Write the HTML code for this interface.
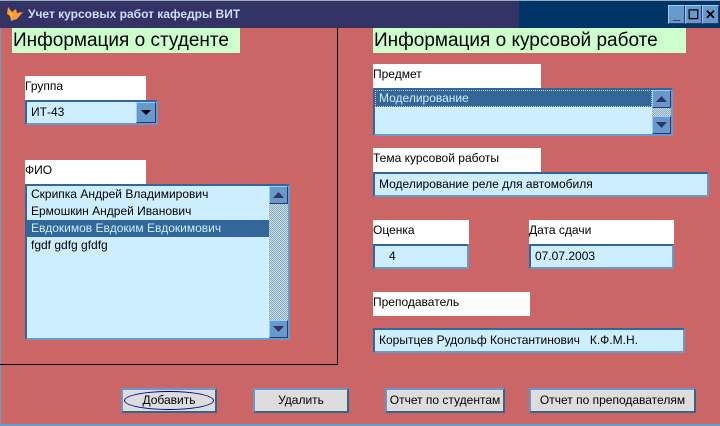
<!DOCTYPE html>
<html><head><meta charset="utf-8"><style>
*{margin:0;padding:0;box-sizing:border-box}
body{width:720px;height:426px;overflow:hidden;background:#cc6666;font-family:"Liberation Sans",sans-serif;font-size:12px;position:relative;color:#000}
.a{position:absolute}
.tb{left:0;top:0;width:720px;height:28px;background:linear-gradient(to right,#333366 0,#333366 519px,#003366 519px);border-top:1px solid #9ab}
.tt{left:28px;top:7px;color:#ccddff;font-weight:bold;font-size:12px}
.wb{top:5px;width:17px;height:19px;background:#6699cc;border:1px solid #9cf;border-right-color:#336;border-bottom-color:#336;color:#000;font-weight:bold;text-align:center;line-height:17px;font-size:13px}
.h{background:#ccffcc;height:25px;font-size:19px;line-height:26px;padding-left:1px}
.l{background:#fff;height:24px;font-size:12px;line-height:20px}
.in{background:#cceeff;border:2px solid #336699;border-right-color:#6699cc;border-bottom-color:#6699cc;line-height:20px;padding-left:4px}
.sb{background:#6699cc;border:1px solid #9cf;border-right-color:#336;border-bottom-color:#336}
.tr{background:repeating-conic-gradient(#8ab 0 25%,#cde 0 50%) 0 0/2px 2px}
.bt{top:388px;height:25px;background:#dddddd;border:2px solid #6699cc;border-right-color:#336688;border-bottom-color:#336688;text-align:center;line-height:21px;font-size:12px}
.it{height:17px;line-height:17px;padding-left:4px}
.sel{background:#336699;color:#cceeff}
</style></head><body>
<div class="a" style="left:0;top:28px;width:1px;height:398px;background:#6699cc"></div>
<div class="a" style="left:0;top:424px;width:720px;height:2px;background:#6699cc"></div>
<div class="a tb"></div>
<svg class="a" style="left:6px;top:6px" width="18" height="16" viewBox="0 0 18 16"><path d="M2 1 L6 6 L10 3 L11 7 L17 6 L11 13 L5 15 L4 10 L1 8 Z" fill="#f93"/><path d="M4 6 L7 9 L5 12Z" fill="#fc3"/></svg>
<div class="a tt">Учет курсовых работ кафедры ВИТ</div>
<div class="a wb" style="left:668px">_</div>
<div class="a wb" style="left:685px">☐</div>
<div class="a wb" style="left:702px">✕</div>

<div class="a" style="left:337px;top:28px;width:1px;height:337px;background:#000"></div>
<div class="a" style="left:0;top:364px;width:338px;height:1px;background:#000"></div>

<div class="a h" style="left:12px;top:28px;width:228px">Информация о студенте</div>
<div class="a h" style="left:373px;top:28px;width:313px">Информация о курсовой работе</div>

<div class="a l" style="left:25px;top:76px;width:121px">Группа</div>
<div class="a in" style="left:25px;top:100px;width:133px;height:25px">ИТ-43</div>
<div class="a sb" style="left:136px;top:102px;width:20px;height:21px"><svg width="18" height="19"><path d="M4 7 L14 7 L9 12Z" fill="#000"/></svg></div>

<div class="a l" style="left:25px;top:160px;width:121px">ФИО</div>
<div class="a in" style="left:25px;top:184px;width:265px;height:156px;padding:0">
<div class="it">Скрипка Андрей Владимирович</div>
<div class="it">Ермошкин Андрей Иванович</div>
<div class="it sel" style="width:242px">Евдокимов Евдоким Евдокимович</div>
<div class="it">fgdf gdfg gfdfg</div>
</div>
<div class="a tr" style="left:269px;top:186px;width:19px;height:152px"></div>
<div class="a sb" style="left:269px;top:186px;width:19px;height:18px"><svg width="17" height="16"><path d="M3 11 L14 11 L8.5 5Z" fill="#336"/></svg></div>
<div class="a sb" style="left:269px;top:320px;width:19px;height:18px"><svg width="17" height="16"><path d="M3 5 L14 5 L8.5 11Z" fill="#336"/></svg></div>

<div class="a l" style="left:373px;top:64px;width:168px">Предмет</div>
<div class="a in" style="left:373px;top:88px;width:300px;height:48px;padding:0">
<div class="it sel" style="width:277px;outline:1px dotted #cc9;outline-offset:-1px">Моделирование</div>
</div>
<div class="a tr" style="left:652px;top:90px;width:19px;height:44px"></div>
<div class="a sb" style="left:652px;top:90px;width:19px;height:18px"><svg width="17" height="16"><path d="M3 11 L14 11 L8.5 5Z" fill="#336"/></svg></div>
<div class="a sb" style="left:652px;top:116px;width:19px;height:18px"><svg width="17" height="16"><path d="M3 5 L14 5 L8.5 11Z" fill="#336"/></svg></div>

<div class="a l" style="left:373px;top:148px;width:168px">Тема курсовой работы</div>
<div class="a in" style="left:373px;top:172px;width:336px;height:25px">Моделирование реле для автомобиля</div>

<div class="a l" style="left:373px;top:220px;width:96px">Оценка</div>
<div class="a in" style="left:373px;top:244px;width:96px;height:25px;padding-left:14px">4</div>
<div class="a l" style="left:529px;top:220px;width:145px">Дата сдачи</div>
<div class="a in" style="left:529px;top:244px;width:145px;height:25px">07.07.2003</div>

<div class="a l" style="left:373px;top:292px;width:157px">Преподаватель</div>
<div class="a in" style="left:373px;top:328px;width:312px;height:25px">Корытцев Рудольф Константинович&nbsp;&nbsp; К.Ф.М.Н.</div>

<div class="a bt" style="left:121px;width:96px"><div style="position:absolute;left:1px;top:1px;width:90px;height:19px;border:1px solid #000099;border-radius:50%"></div>Добавить</div>
<div class="a bt" style="left:253px;width:96px">Удалить</div>
<div class="a bt" style="left:385px;width:120px">Отчет по студентам</div>
<div class="a bt" style="left:529px;width:167px">Отчет по преподавателям</div>
</body></html>
